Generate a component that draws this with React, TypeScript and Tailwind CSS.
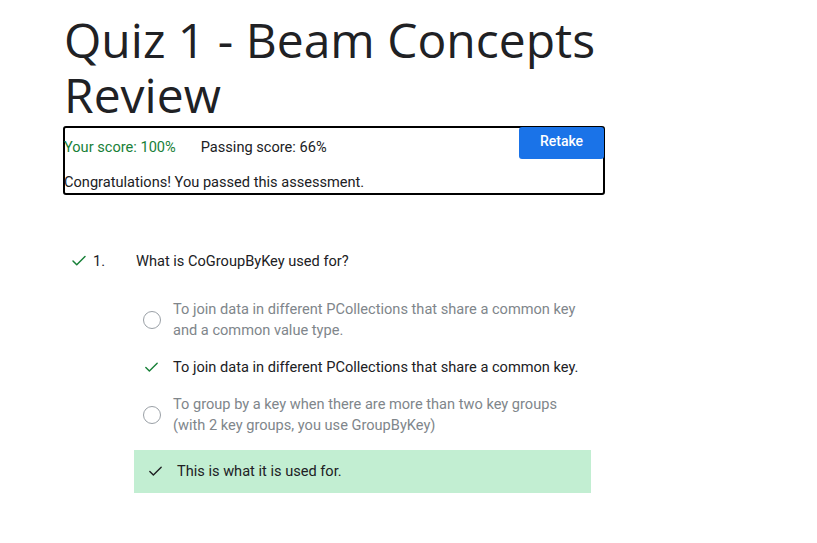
import { Check } from "lucide-react";

const OPTIONS = [
  {
    id: "a",
    text: "To join data in different PCollections that share a common key and a common value type.",
    chosen: false,
  },
  {
    id: "b",
    text: "To join data in different PCollections that share a common key.",
    chosen: true,
  },
  {
    id: "c",
    text: "To group by a key when there are more than two key groups (with 2 key groups, you use GroupByKey)",
    chosen: false,
  },
];

export default function App() {
  return (
    <div className="min-h-[543px] bg-white pl-16 text-[14.6px] text-[#202124] [font-family:Roboto,'Liberation_Sans',sans-serif]">
      <h1 className="w-[560px] pt-[12px] text-[48px] leading-[55px] font-normal text-[#202124] [font-family:'Open_Sans',Roboto,sans-serif]">
        Quiz 1 - Beam Concepts Review
      </h1>

      {/* score box */}
      <div className="mt-[4px] -ml-px w-[542px] rounded-[3px] border-2 border-black">
        <div className="flex items-start justify-between">
          <div className="-ml-px flex pt-[9px] leading-[20px]">
            <span className="text-[#188038]">Your score: 100%</span>
            <span className="ml-[25px]">Passing score: 66%</span>
          </div>
          <button className="-mt-px -mr-px h-[32px] w-[85px] rounded-[3px] bg-[#1a73e8] pb-[3px] text-[14px] font-medium text-white">
            Retake
          </button>
        </div>
        <p className="-ml-px pt-[13px] pb-[1px] leading-[20px]">Congratulations! You passed this assessment.</p>
      </div>

      {/* question */}
      <div className="mt-[56px] flex items-center leading-[20px]">
        <Check className="ml-[6px] h-[18px] w-[18px] text-[#188038]" strokeWidth={2} />
        <span className="ml-[5px] w-[43px]">1.</span>
        <span>What is CoGroupByKey used for?</span>
      </div>

      <div className="mt-[28px] ml-[70px] flex w-[457px] flex-col gap-[16px]">
        {OPTIONS.map((opt) => (
          <div key={opt.id} className="flex items-center">
            <div className="flex w-[39px] shrink-0 justify-start pl-[9px]">
              {opt.chosen ? (
                <Check className="h-[17px] w-[17px] text-[#188038]" strokeWidth={2} />
              ) : (
                <div className="h-[18px] w-[18px] shrink-0 rounded-full border border-[#9aa0a6]" />
              )}
            </div>
            <p className={opt.chosen ? "w-[410px] leading-[21px] text-[#202124]" : "w-[410px] leading-[21px] text-[#80868b]"}>
              {opt.text}
            </p>
          </div>
        ))}
      </div>

      <div className="mt-[14px] ml-[70px] flex h-[43px] w-[457px] items-center bg-[#c2eed2]">
        <Check className="ml-[13px] h-[17px] w-[17px] text-[#202124]" strokeWidth={2} />
        <span className="ml-[13px]">This is what it is used for.</span>
      </div>
    </div>
  );
}
